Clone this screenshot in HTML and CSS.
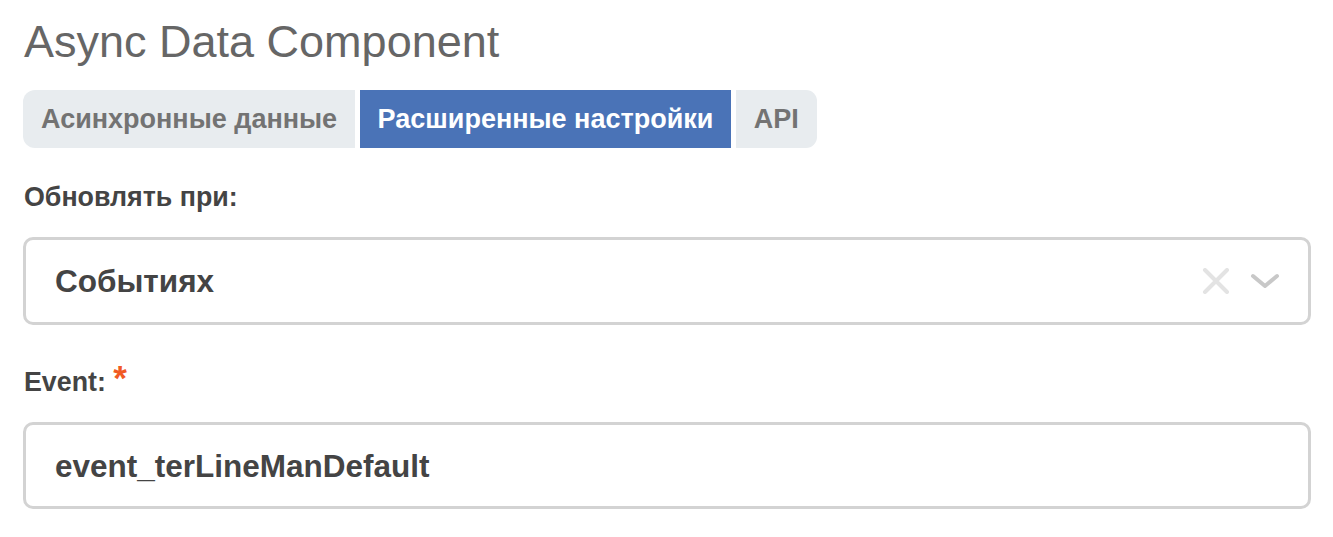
FILE: index.html
```html
<!DOCTYPE html>
<html lang="ru">
<head>
<meta charset="utf-8">
<title>Async Data Component</title>
<link rel="stylesheet" href="styles.css">
</head>
<body>
<div class="page">
  <h1 class="title">Async Data Component</h1>
  <div class="tabs">
    <div class="tab tab-first">Асинхронные данные</div>
    <div class="tab tab-active">Расширенные настройки</div>
    <div class="tab tab-last">API</div>
  </div>
  <div class="group">
    <div class="label">Обновлять при:</div>
    <div class="field select">
      <span class="value">Событиях</span>
      <span class="icons">
        <svg class="icon-clear" width="28" height="26" viewBox="0 0 28 26"><path d="M3 2 L25 24 M25 2 L3 24" stroke="#e3e3e3" stroke-width="4" stroke-linecap="round" fill="none"/></svg>
        <svg class="icon-chevron" width="30" height="16" viewBox="0 0 30 16"><path d="M3 3 L15 13 L27 3" stroke="#c8c8c8" stroke-width="4" stroke-linecap="round" stroke-linejoin="round" fill="none"/></svg>
      </span>
    </div>
  </div>
  <div class="group">
    <div class="label">Event: <span class="required">*</span></div>
    <div class="field input">
      <span class="value">event_terLineManDefault</span>
    </div>
  </div>
</div>
</body>
</html>
```
FILE: styles.css
```css
* { box-sizing: border-box; }
html, body { margin: 0; padding: 0; background: #fff; }
body { font-family: "Liberation Sans", Arial, sans-serif; }
.page { padding: 16px 22px 0 23px; }
.title {
  margin: 0 0 22px 1px;
  font-size: 45px;
  line-height: 52px;
  font-weight: normal;
  color: #666;
}
.tabs { display: flex; gap: 4.5px; margin-bottom: 34px; }
.tab {
  height: 58px;
  display: flex;
  align-items: center;
  padding: 0 18px;
  background: #e8ecef;
  color: #737373;
  font-weight: bold;
  font-size: 27px;
}
.tab-first { border-radius: 12px 0 0 12px; }
.tab-last { border-radius: 0 11px 11px 0; padding: 0 18px 0 18px; }
.tab-active { background: #4a73b7; color: #fff; }
.group { margin-bottom: 42px; }
.label {
  font-size: 26.8px;
  line-height: 30px;
  font-weight: bold;
  color: #444;
  margin: 0 0 25px 1px;
}
.required { color: #f15a24; font-size: 35px; line-height: 0; vertical-align: 1px; }
.field {
  border: 3px solid #d3d3d3;
  border-radius: 10px;
  display: flex;
  align-items: center;
  padding: 0 28px 0 29px;
  font-size: 31.5px;
  line-height: 36px;
  font-weight: bold;
  color: #444;
}
.select { height: 88px; justify-content: space-between; }
.input { height: 87px; }
.icons { display: flex; align-items: center; gap: 20px; }
.icon-clear, .icon-chevron { display: block; }
```
